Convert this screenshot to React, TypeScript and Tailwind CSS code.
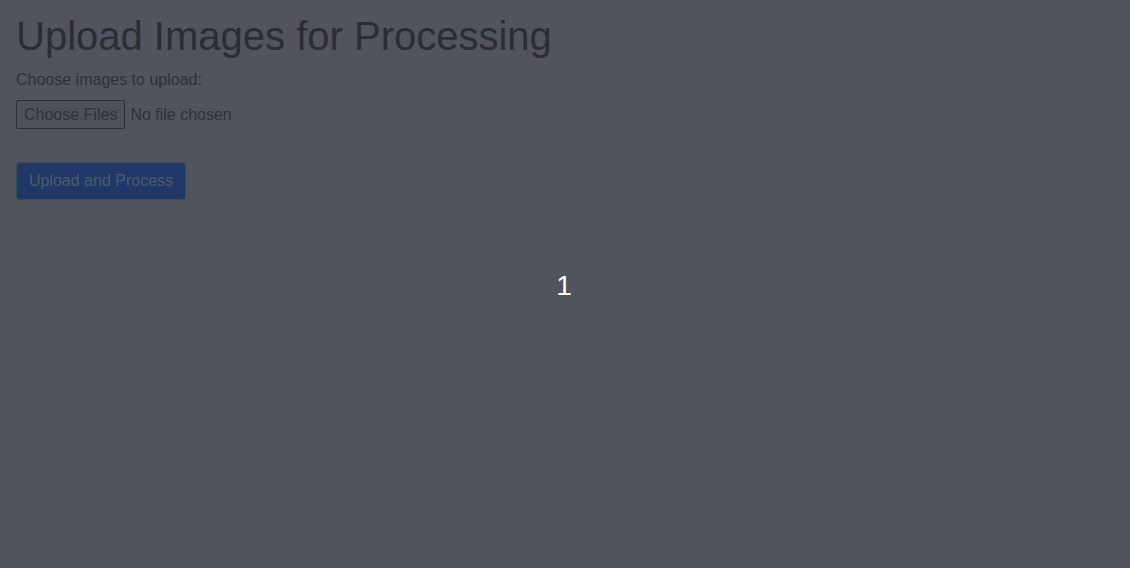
import React from "react";

export default function App() {
  return (
    <div className="relative min-h-[568px] w-full bg-[#51545c] px-4 pt-[12px]" style={{ fontFamily: '"Liberation Sans", Arial, sans-serif' }}>
      <h1 className="m-0 text-[40px] leading-[48px] text-[#2a2d33] font-normal">Upload Images for Processing</h1>
      <div className="mt-[10px] text-[16px] leading-[20px] text-[#2e3137]">Choose images to upload:</div>
      <div className="mt-[10px] flex items-center h-[29px]">
        <div className="h-[29px] px-[7px] flex items-center border border-[#2c2f35] bg-[#4e5159] rounded-[2px] text-[16px] text-[#2e3137]">Choose Files</div>
        <span className="ml-[5px] text-[16px] text-[#2e3137]">No file chosen</span>
      </div>
      <div className="mt-[33px] flex">
        <div className="flex items-center h-[38px] w-[170px] justify-center rounded-[4px] bg-[#213767] border border-[#364f55] text-[16px] text-[#4a5d6a]">Upload and Process</div>
      </div>
      <div className="absolute inset-0 flex items-center justify-center">
        <span className="text-[28px] text-white leading-none mt-[4px] mr-[2px]">1</span>
      </div>
    </div>
  );
}
